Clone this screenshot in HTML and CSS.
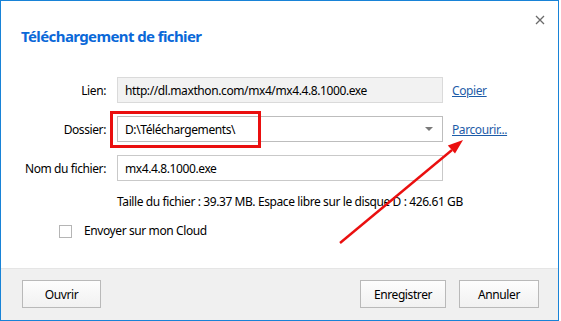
FILE: index.html
```html
<!DOCTYPE html>
<html lang="fr">
<head>
    <meta charset="UTF-8">
    <title>Téléchargement de fichier</title>
    <link rel="stylesheet" href="styles.css">
</head>
<body>
    <div class="dialog">
        <div class="header">
            <h1>Téléchargement de fichier</h1>
            <span class="close">
                <svg width="10" height="10" viewBox="0 0 10 10">
                    <path d="M1 1 L9 9 M9 1 L1 9" stroke="#6b6b6b" stroke-width="1.3"/>
                </svg>
            </span>
        </div>

        <div class="form">
            <label class="form-label">Lien:</label>
            <div class="field field-readonly">http://dl.maxthon.com/mx4/mx4.4.8.1000.exe</div>
            <a class="link" href="#">Copier</a>

            <label class="form-label">Dossier:</label>
            <div class="field field-select">
                <span>D:\Téléchargements\</span>
                <span class="caret"></span>
            </div>
            <a class="link" href="#">Parcourir...</a>

            <label class="form-label">Nom du fichier:</label>
            <div class="field">mx4.4.8.1000.exe</div>
            <span></span>
        </div>

        <p class="info">Taille du fichier : 39.37 MB. Espace libre sur le disque D : 426.61 GB</p>

        <label class="cloud">
            <span class="checkbox"></span>
            Envoyer sur mon Cloud
        </label>

        <div class="footer">
            <button class="btn btn-open">Ouvrir</button>
            <div class="footer-right">
                <button class="btn btn-save">Enregistrer</button>
                <button class="btn btn-cancel">Annuler</button>
            </div>
        </div>

        <!-- annotation -->
        <div class="highlight"></div>
        <svg class="arrow" width="559" height="321" viewBox="0 0 559 321">
            <line x1="340" y1="243" x2="452" y2="150" stroke="#ea0f0f" stroke-width="2.4"/>
            <polygon points="463,140 455,153.6 447.8,145.4" fill="#ea0f0f"/>
        </svg>
    </div>
</body>
</html>
```

FILE: styles.css
```css
body {
    margin: 0;
    background: #fff;
    font-family: "Noto Sans", "Open Sans", sans-serif;
    font-size: 12px;
    letter-spacing: -0.4px;
    color: #000;
}
.dialog {
    position: relative;
    width: 559px;
    height: 321px;
    box-sizing: border-box;
    border: 1px solid #1883d7;
    display: flex;
    flex-direction: column;
}
.header {
    height: 76px;
    display: flex;
    justify-content: space-between;
    align-items: flex-start;
}
h1 {
    margin: 25px 0 0 20px;
    font-size: 15px;
    line-height: 20px;
    font-weight: bold;
    letter-spacing: -0.6px;
    color: #0a68d8;
}
.close {
    margin: 14px 13px 0 0;
    line-height: 0;
}
.form {
    display: grid;
    grid-template-columns: 116px 326px auto;
    grid-auto-rows: 26px;
    row-gap: 13px;
    align-items: center;
}
.form-label {
    text-align: right;
    padding-right: 11px;
    color: #000;
}
.field {
    height: 26px;
    box-sizing: border-box;
    border: 1px solid #c9c9c9;
    padding: 0 8px 0 7px;
    display: flex;
    align-items: center;
    white-space: nowrap;
}
.field-readonly {
    background: #f2f2f2;
    border-color: #dadada;
}
.field-select {
    justify-content: space-between;
    border-color: #bdbdbd;
}
.caret {
    width: 0;
    height: 0;
    border-left: 4px solid transparent;
    border-right: 4px solid transparent;
    border-top: 4px solid #7a7a7a;
    margin-right: 1px;
}
.link {
    margin-left: 9px;
    color: #1d5ca8;
    text-decoration: underline;
}
.info {
    margin: 13px 0 0 116px;
    line-height: 16px;
}
.cloud {
    display: flex;
    align-items: center;
    margin: 13px 0 0 58px;
    line-height: 16px;
}
.checkbox {
    width: 13px;
    height: 13px;
    box-sizing: border-box;
    border: 1px solid #b5b5b5;
    margin-right: 12px;
}
.footer {
    margin-top: auto;
    height: 52px;
    box-sizing: border-box;
    background: #f0f0f0;
    border-top: 1px solid #e5e5e5;
    padding: 11px 19px 0 21px;
    display: flex;
    justify-content: space-between;
    align-items: flex-start;
}
.footer-right {
    display: flex;
    gap: 13px;
}
.btn {
    height: 28px;
    box-sizing: border-box;
    border: 1px solid #b9b9b9;
    background: linear-gradient(#fdfdfd, #f1f1f1);
    font-family: inherit;
    font-size: 12px;
    letter-spacing: -0.4px;
    color: #000;
    padding: 0;
}
.btn-open {
    width: 79px;
}
.btn-save {
    width: 86px;
}
.btn-cancel {
    width: 80px;
}
.highlight {
    position: absolute;
    left: 109px;
    top: 110px;
    width: 151px;
    height: 37px;
    box-sizing: border-box;
    border: 3px solid #ea0f0f;
}
.arrow {
    position: absolute;
    left: -1px;
    top: -1px;
    pointer-events: none;
}
```
